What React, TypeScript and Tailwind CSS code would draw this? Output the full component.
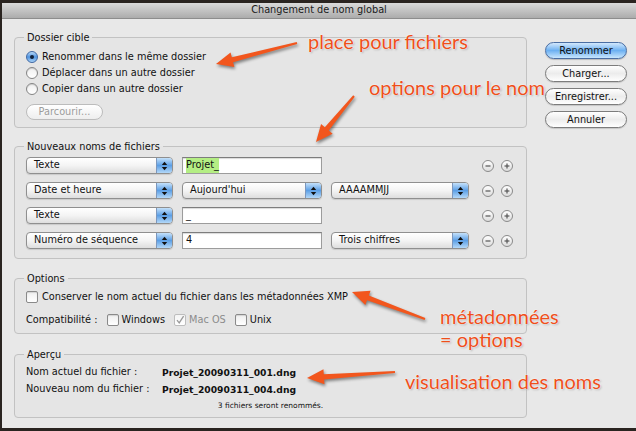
import React from 'react'

type Pt = [number, number]

// flèche effilée : de la queue vers la pointe
function arrowPoints(tail: Pt, tip: Pt, head = 17, half = 7.5, neck = 2.6) {
  const [tx, ty] = tail
  const [px, py] = tip
  const len = Math.hypot(px - tx, py - ty)
  const ux = (px - tx) / len
  const uy = (py - ty) / len
  const nx = -uy
  const ny = ux
  const bx = px - ux * head
  const by = py - uy * head
  const pts: Pt[] = [
    [tx + nx * 1, ty + ny * 1],
    [bx + nx * neck, by + ny * neck],
    [bx + nx * half, by + ny * half],
    [px, py],
    [bx - nx * half, by - ny * half],
    [bx - nx * neck, by - ny * neck],
    [tx - nx * 1, ty - ny * 1],
  ]
  return pts.map(p => p.join(',')).join(' ')
}

const arrows: [Pt, Pt][] = [
  [[297, 43], [216, 64]],
  [[354, 96], [316, 142]],
  [[425, 319], [352, 292]],
  [[395, 372], [307, 378]],
]

function Annotations() {
  const note =
    "absolute font-['Lato',sans-serif] text-[20px] leading-[20px] text-[#ee4f1b] [text-shadow:0_0_2px_#fff,0_0_1px_#fff,1px_1px_2px_rgba(0,0,0,0.25)] whitespace-nowrap"
  return (
    <>
      <svg
        className="absolute inset-0 pointer-events-none drop-shadow-[1px_2px_1.5px_rgba(0,0,0,0.45)]"
        width={636}
        height={431}
      >
        {arrows.map(([t, p], i) => (
          <polygon key={i} points={arrowPoints(t, p)} fill="#f2561d" />
        ))}
      </svg>
      <span className={note + ' left-[308px] top-[31px]'}>place pour fichiers</span>
      <span className={note + ' left-[369px] top-[77px]'}>options pour le nom</span>
      <span className={note + ' left-[440px] top-[306px]'}>métadonnées</span>
      <span className={note + ' left-[440px] top-[329px]'}>= options</span>
      <span className={note + ' left-[405px] top-[371px]'}>visualisation des noms</span>
    </>
  )
}

function Popup({ label, className }: { label: string; className: string }) {
  return (
    <div
      className={
        'flex h-[17px] items-stretch overflow-hidden rounded-[4px] border border-[#8f8f8f] bg-gradient-to-b from-white via-[#f4f4f4] to-[#dedede] shadow-[0_1px_1px_rgba(0,0,0,0.12)] ' +
        className
      }
    >
      <span className="flex flex-1 items-center pl-[7px]">{label}</span>
      <span className="flex w-[16px] items-center justify-center border-l border-[#7c97bd] bg-gradient-to-b from-[#c4e1fa] via-[#5c9fe5] to-[#b3d8f8]">
        <svg width="7" height="10" viewBox="0 0 7 10">
          <path d="M3.5 0.8 L6.2 4 L0.8 4 Z" fill="#111" />
          <path d="M3.5 9.2 L6.2 6 L0.8 6 Z" fill="#111" />
        </svg>
      </span>
    </div>
  )
}

function Field({ children }: { children?: React.ReactNode }) {
  return (
    <div className="flex h-[17px] w-[140px] items-center border border-[#9c9c9c] border-t-[#7d7d7d] bg-white pl-[3px] shadow-[inset_0_1px_1px_rgba(0,0,0,0.15)]">
      {children}
    </div>
  )
}

function RoundBtn({ plus }: { plus?: boolean }) {
  return (
    <span className="flex h-[12px] w-[12px] items-center justify-center rounded-full border border-[#8a8a8a] bg-gradient-to-b from-white to-[#dcdcdc]">
      <svg width="8" height="8" viewBox="0 0 8 8">
        <path d="M1.5 4 H6.5" stroke="#555" strokeWidth="1.2" />
        {plus && <path d="M4 1.5 V6.5" stroke="#555" strokeWidth="1.2" />}
      </svg>
    </span>
  )
}

function Row({ first, second, third }: { first: string; second: React.ReactNode; third?: string }) {
  return (
    <div className="flex h-[25px] items-center">
      <Popup label={first} className="w-[147px]" />
      <div className="ml-[9px]">{second}</div>
      {third && <Popup label={third} className="ml-[9px] w-[138px]" />}
      <div className="ml-auto mr-[2px] flex gap-[7px]">
        <RoundBtn />
        <RoundBtn plus />
      </div>
    </div>
  )
}

function Radio({ on, label }: { on?: boolean; label: string }) {
  return (
    <div className="flex h-[16px] items-center gap-[4px]">
      {on ? (
        <span className="flex h-[12px] w-[12px] items-center justify-center rounded-full border border-[#3f67a3] bg-gradient-to-b from-[#b7d9f8] via-[#4f93df] to-[#a9d3f7]">
          <span className="h-[4px] w-[4px] rounded-full bg-[#10213a]" />
        </span>
      ) : (
        <span className="h-[12px] w-[12px] rounded-full border border-[#858585] bg-gradient-to-b from-[#f0f0f0] to-white shadow-[inset_0_1px_1px_rgba(0,0,0,0.15)]" />
      )}
      <span>{label}</span>
    </div>
  )
}

function Check({ checked, disabled }: { checked?: boolean; disabled?: boolean }) {
  return (
    <span
      className={
        disabled
          ? 'flex h-[12px] w-[12px] items-center justify-center rounded-[2px] border border-[#bdbdbd] bg-gradient-to-b from-[#f4f4f4] to-white'
          : 'flex h-[12px] w-[12px] items-center justify-center rounded-[2px] border border-[#8a8a8a] bg-gradient-to-b from-[#efefef] to-white shadow-[inset_0_1px_1px_rgba(0,0,0,0.12)]'
      }
    >
      {checked && (
        <svg width="10" height="10" viewBox="0 0 10 10">
          <path d="M2 5.2 L4.2 7.8 L8.6 1.2" fill="none" stroke="#9a9a9a" strokeWidth="1.3" />
        </svg>
      )}
    </span>
  )
}

function AquaBtn({ label, main }: { label: string; main?: boolean }) {
  return (
    <button
      className={
        main
          ? 'h-[17px] w-[82px] rounded-full border border-[#4a6ea3] bg-gradient-to-b from-[#d2e8fc] via-[#6cb0f1] to-[#c8e6fd] text-center leading-[15px] shadow-[0_1px_1px_rgba(0,0,0,0.2)]'
          : 'h-[17px] w-[82px] rounded-full border border-[#7c7c7c] bg-gradient-to-b from-white via-[#ececec] to-white text-center leading-[15px] shadow-[0_1px_1px_rgba(0,0,0,0.15)]'
      }
    >
      {label}
    </button>
  )
}

const fieldset = 'rounded-[4px] border border-[#c2c2c2] bg-[#e5e5e5] px-[11px]'
const legend = '-ml-[2px] px-[3px] leading-[13px]'

export default function App() {
  return (
    <div className="relative h-[431px] w-[636px] overflow-hidden bg-[#2a2420] font-['DejaVu_Sans',sans-serif] text-[9.75px] text-[#111]">
      <div className="ml-[2px] mt-[3px] flex h-[425px] w-[634px] flex-col">
        {/* barre de titre */}
        <div className="flex h-[16px] items-center justify-center border-b border-[#8d8d8d] bg-gradient-to-b from-[#dadada] to-[#acacac] text-[#1a1a1a]">
          Changement de nom global
        </div>

        <div className="flex flex-1 bg-[#e8e8e8] pt-[12px]">
          <div className="ml-[12px] flex w-[513px] flex-col">
            <fieldset className={fieldset + ' h-[97px]'}>
              <legend className={legend}>Dossier cible</legend>
              <div className="pt-[5px]">
                <Radio on label="Renommer dans le même dossier" />
                <Radio label="Déplacer dans un autre dossier" />
                <Radio label="Copier dans un autre dossier" />
              </div>
              <button className="mt-[7px] h-[16px] w-[77px] rounded-full border border-[#bcbcbc] bg-gradient-to-b from-white to-[#eeeeee] text-center leading-[14px] text-[#9c9c9c]">
                Parcourir...
              </button>
            </fieldset>

            <fieldset className={fieldset + ' mt-[12px] h-[119px]'}>
              <legend className={legend}>Nouveaux noms de fichiers</legend>
              <Row
                first="Texte"
                second={
                  <Field>
                    <span className="bg-[#b4ee84]">Projet_</span>
                  </Field>
                }
              />
              <Row
                first="Date et heure"
                second={<Popup label="Aujourd'hui" className="w-[140px]" />}
                third="AAAAMMJJ"
              />
              <Row first="Texte" second={<Field>_</Field>} />
              <Row first="Numéro de séquence" second={<Field>4</Field>} third="Trois chiffres" />
            </fieldset>

            <fieldset className={fieldset + ' mt-[13px] h-[62px]'}>
              <legend className={legend}>Options</legend>
              <div className="mt-[3px] flex h-[18px] items-center gap-[4px]">
                <Check />
                <span>Conserver le nom actuel du fichier dans les métadonnées XMP</span>
              </div>
              <div className="mt-[5px] flex h-[18px] items-center">
                <span>Compatibilité :</span>
                <span className="ml-[9px] flex items-center gap-[3px]">
                  <Check />
                  Windows
                </span>
                <span className="ml-[9px] flex items-center gap-[3px] text-[#8c8c8c]">
                  <Check checked disabled />
                  Mac OS
                </span>
                <span className="ml-[9px] flex items-center gap-[3px]">
                  <Check />
                  Unix
                </span>
              </div>
            </fieldset>

            <fieldset className={fieldset + ' mt-[14px] h-[70px]'}>
              <legend className={legend}>Aperçu</legend>
              <div className="mt-[3px] flex h-[17px] items-center">
                <span className="w-[136px]">Nom actuel du fichier :</span>
                <span className="text-[9.2px] font-bold">Projet_20090311_001.dng</span>
              </div>
              <div className="flex h-[17px] items-center">
                <span className="w-[136px]">Nouveau nom du fichier :</span>
                <span className="text-[9.2px] font-bold">Projet_20090311_004.dng</span>
              </div>
              <div className="mt-[2px] text-center text-[7.5px] leading-[12px]">3 fichiers seront renommés.</div>
            </fieldset>
          </div>

          <div className="ml-[18px] flex flex-col gap-[6px] pt-[11px]">
            <AquaBtn main label="Renommer" />
            <AquaBtn label="Charger..." />
            <AquaBtn label="Enregistrer..." />
            <AquaBtn label="Annuler" />
          </div>
        </div>
      </div>
      <Annotations />
    </div>
  )
}
